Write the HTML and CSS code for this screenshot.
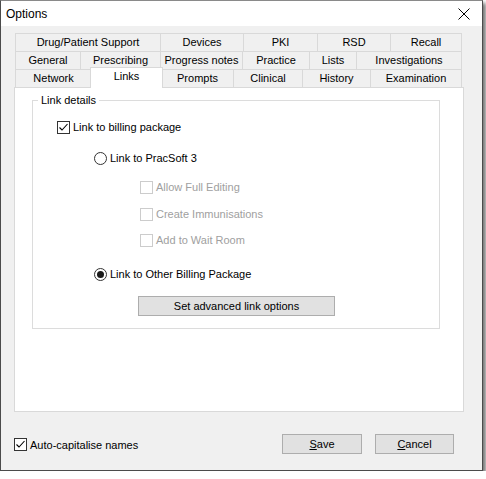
FILE: index.html
```html
<!DOCTYPE html>
<html>
<head>
    <meta charset="UTF-8">
    <title>Options</title>
    <link rel="stylesheet" href="styles.css">
</head>
<body>
  <div class="window">
    <div class="titlebar">
      <span class="title">Options</span>
      <svg class="close" width="12" height="12" viewBox="0 0 12 12"><path d="M0.5 0.5 L11.5 11.5 M11.5 0.5 L0.5 11.5" stroke="#000" stroke-width="1" fill="none"/></svg>
    </div>
    <div class="client">
      <div class="tabs">
        <div class="tab-row row-1">
          <div class="tab">Drug/Patient Support</div>
          <div class="tab">Devices</div>
          <div class="tab">PKI</div>
          <div class="tab">RSD</div>
          <div class="tab">Recall</div>
        </div>
        <div class="tab-row row-2">
          <div class="tab">General</div>
          <div class="tab">Prescribing</div>
          <div class="tab">Progress notes</div>
          <div class="tab">Practice</div>
          <div class="tab">Lists</div>
          <div class="tab">Investigations</div>
        </div>
        <div class="tab-row row-3">
          <div class="tab">Network</div>
          <div class="tab selected">Links</div>
          <div class="tab">Prompts</div>
          <div class="tab">Clinical</div>
          <div class="tab">History</div>
          <div class="tab">Examination</div>
        </div>
        <div class="tab-panel">
          <fieldset class="group">
            <legend>Link details</legend>
            <label class="opt opt-billing">
              <span class="check"><svg width="11" height="11" viewBox="0 0 11 11"><path d="M1.5 5.5 L4 8 L9.5 2" stroke="#000" stroke-width="1.1" fill="none"/></svg></span>
              Link to billing package
            </label>
            <label class="opt opt-radio opt-pracsoft">
              <span class="radio"></span>
              Link to PracSoft 3
            </label>
            <label class="opt opt-sub disabled first">
              <span class="check"></span>
              Allow Full Editing
            </label>
            <label class="opt opt-sub disabled second">
              <span class="check"></span>
              Create Immunisations
            </label>
            <label class="opt opt-sub disabled third">
              <span class="check"></span>
              Add to Wait Room
            </label>
            <label class="opt opt-radio opt-other">
              <span class="radio on"></span>
              Link to Other Billing Package
            </label>
            <button class="btn btn-advanced">Set advanced link options</button>
          </fieldset>
        </div>
      </div>
      <div class="footer">
        <label class="opt opt-caps">
          <span class="check"><svg width="11" height="11" viewBox="0 0 11 11"><path d="M1.5 5.5 L4 8 L9.5 2" stroke="#000" stroke-width="1.1" fill="none"/></svg></span>
          Auto-capitalise names
        </label>
        <button class="btn btn-save"><u>S</u>ave</button>
        <button class="btn btn-cancel"><u>C</u>ancel</button>
      </div>
    </div>
  </div>
</body>
</html>
```
FILE: styles.css
```css
body {
    margin: 0;
    background: #fff;
    font-family: "Liberation Sans", Arial, sans-serif;
    font-size: 11px;
    color: #000;
}
.window {
    box-sizing: border-box;
    width: 483px;
    height: 471px;
    border: 1px solid #4b4b4b;
    border-top-color: #8a8a8a;
    background: #f0f0f0;
    box-shadow: 3px 3px 4px rgba(0, 0, 0, 0.55);
    display: flex;
    flex-direction: column;
}
.titlebar {
    height: 25px;
    background: #fff;
    display: flex;
    align-items: center;
    padding: 0 0 0 5px;
}
.title {
    font-size: 12px;
    flex: 1;
}
.close {
    margin-right: 12px;
    margin-top: 1px;
}
.client {
    flex: 1;
    display: flex;
    flex-direction: column;
}

/* tabs */
.tabs {
    width: 450px;
    margin: 7px 0 0 13px;
}
.tab-row {
    display: grid;
    height: 18px;
    padding-left: 1px;
}
.row-1 { grid-template-columns: 145px 83px 74px 73px 72px; }
.row-2 { grid-template-columns: 65px 80px 82px 67px 47px 106px; }
.row-3 { grid-template-columns: 76px 70px 72px 69px 68px 92px; }
.tab {
    border: 1px solid #d9d9d9;
    border-bottom: none;
    border-right: none;
    text-align: center;
    line-height: 17px;
    background: #f0f0f0;
}
.tab:last-child {
    border-right: 1px solid #d9d9d9;
}
.tab.selected {
    position: relative;
    z-index: 1;
    background: #fff;
    margin: -2px -2px -1px -1px;
    border-right: 1px solid #d9d9d9;
    line-height: 17px;
}
.tab-panel {
    box-sizing: border-box;
    height: 325px;
    border: 1px solid #d9d9d9;
    background: #fff;
}

/* group box */
.group {
    margin: 5px 23px 0 17px;
    padding: 0 0 12px 0;
    border: 1px solid #dcdcdc;
}
.group legend {
    margin-left: 5px;
    padding: 0 3px 0 3px;
    line-height: 14px;
}
.opt {
    display: flex;
    align-items: center;
    height: 14px;
}
.check {
    box-sizing: border-box;
    width: 13px;
    height: 13px;
    border: 1px solid #333;
    background: #fff;
    margin-right: 3px;
    display: flex;
    align-items: center;
    justify-content: center;
}
.radio {
    box-sizing: border-box;
    width: 13px;
    height: 13px;
    border: 1px solid #333;
    border-radius: 50%;
    background: #fff;
    margin-right: 3px;
    display: flex;
    align-items: center;
    justify-content: center;
}
.radio.on::after {
    content: "";
    width: 7px;
    height: 7px;
    border-radius: 50%;
    background: #1a1a1a;
}
.opt-billing { margin: 13px 0 0 24px; }
.opt-radio { margin-left: 61px; }
.opt-pracsoft { margin-top: 17px; }
.opt-sub { margin-left: 107px; }
.opt-sub.first { margin-top: 15px; }
.opt-sub.second { margin-top: 13px; }
.opt-sub.third { margin-top: 12px; }
.opt-other { margin-top: 20px; }
.disabled { color: #a0a0a0; }
.disabled .check { border-color: #cccccc; }

.btn {
    box-sizing: border-box;
    height: 20px;
    border: 1px solid #adadad;
    background: #e1e1e1;
    font-family: "Liberation Sans", Arial, sans-serif;
    font-size: 11px;
    color: #000;
    padding: 0;
}
.btn-advanced {
    display: block;
    width: 197px;
    margin: 15px 0 0 105px;
}

/* footer */
.footer {
    display: flex;
    align-items: center;
    margin-top: 22px;
    height: 20px;
    padding-left: 13px;
}
.opt-caps {
    flex: 1;
    margin-top: 1px;
}
.btn-save {
    width: 80px;
    margin-right: 13px;
}
.btn-cancel {
    width: 79px;
    margin-right: 28px;
}
```
